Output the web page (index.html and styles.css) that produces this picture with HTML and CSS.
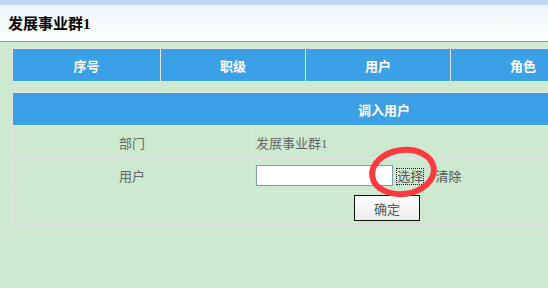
FILE: index.html
```html
<!DOCTYPE html>
<html>
<head>
    <meta charset='utf-8'>
    <title>调入用户</title>
    <meta name='viewport' content='width=device-width, initial-scale=1'>
    <link rel="stylesheet" href="styles.css">
</head>
<body>
    <div class="page">
        <header class="top-bar">
            <h1>发展事业群1</h1>
        </header>
        <div class="content">
            <table class="grid grid-head">
                <colgroup>
                    <col class="c-first"><col class="c-std"><col class="c-std"><col class="c-std"><col class="c-last">
                </colgroup>
                <tr>
                    <th>序号</th>
                    <th>职级</th>
                    <th>用户</th>
                    <th>角色</th>
                    <th></th>
                </tr>
            </table>
            <form class="form-move">
                <table class="grid grid-form">
                    <colgroup>
                        <col class="c-label"><col>
                    </colgroup>
                    <tr>
                        <th colspan="2">调入用户</th>
                    </tr>
                    <tr>
                        <td class="label">部门</td>
                        <td class="value">发展事业群1</td>
                    </tr>
                    <tr>
                        <td class="label">用户</td>
                        <td class="value">
                            <input type="text" class="txt-user">
                            <a class="lnk lnk-focus" href="#">选择</a>
                            <a class="lnk lnk-clear" href="#">清除</a>
                        </td>
                    </tr>
                    <tr>
                        <td colspan="2" class="actions">
                            <button type="button" class="btn-ok">确定</button>
                        </td>
                    </tr>
                </table>
            </form>
            <svg class="mark" width="76" height="58" viewBox="0 0 76 58">
                <ellipse cx="37" cy="29" rx="31" ry="22" fill="none" stroke="#fb3a3f" stroke-width="6" transform="rotate(-8 37 29)"/>
            </svg>
        </div>
    </div>
</body>
</html>
```

FILE: styles.css
```css
html, body {
    margin: 0;
    padding: 0;
}
body {
    background: #cde9cf;
    font-family: "Liberation Serif", "Noto Sans CJK SC", serif;
    font-size: 13px;
    color: #666;
}
.page {
    width: 548px;
    height: 288px;
    overflow: hidden;
    position: relative;
}
.top-bar {
    height: 36px;
    border-top: 5px solid #c3d7ee;
    border-bottom: 1px solid #7d9dbd;
    background: linear-gradient(#ecf4f8, #ffffff);
    display: flex;
    align-items: center;
    padding-left: 8px;
}
.top-bar h1 {
    margin: 0;
    font-size: 15px;
    font-weight: bold;
    color: #000;
    line-height: 1;
    padding-top: 2px;
}
.content {
    padding: 6px 0 0 12px;
}
.grid {
    border-collapse: collapse;
    table-layout: fixed;
    width: 744px;
    border: 1px solid #e4e4e4;
}
.grid th {
    background: #3ca0e6;
    color: #fff;
    font-weight: bold;
    font-size: 13px;
    height: 32px;
    padding: 0;
    border: 1px solid #e4e4e4;
    font-family: "Noto Sans CJK SC", sans-serif;
}
.grid td {
    border: 1px solid #e4e4e4;
    height: 32px;
    padding: 0;
}
.c-first { width: 148px; }
.c-std { width: 145px; }
.c-last { width: 161px; }
.c-label { width: 239px; }
.form-move {
    margin: 10px 0 0;
}
.label {
    text-align: center;
}
.value {
    padding-left: 4px !important;
}
.txt-user {
    width: 131px;
    height: 17px;
    border: 1px solid #7f9db9;
    padding: 1px 2px;
    margin: 0;
    vertical-align: middle;
    background: #fff;
}
.lnk {
    color: #555;
    text-decoration: none;
    vertical-align: middle;
}
.lnk-focus {
    margin-left: 1px;
    outline: 1px dotted #222;
}
.lnk-clear {
    margin-left: 9px;
}
.actions {
    text-align: center;
}
.btn-ok {
    width: 66px;
    height: 26px;
    margin-left: 6px;
    border: 1px solid #111;
    background: linear-gradient(#ffffff, #ececec);
    color: #555;
    font-family: "Noto Sans CJK SC", sans-serif;
    font-size: 13px;
    padding: 0;
}
.mark {
    position: absolute;
    left: 366px;
    top: 143px;
}
```
